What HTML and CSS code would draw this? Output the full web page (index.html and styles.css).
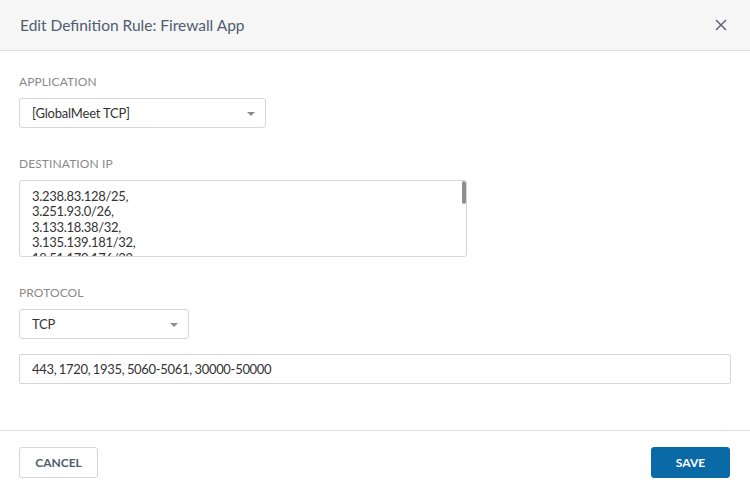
FILE: index.html
```html
<!DOCTYPE html>
<html>
<head>
<meta charset="utf-8">
<link rel="stylesheet" href="styles.css">
</head>
<body>
<div class="dialog">
  <header class="header">
    <h1 class="title">Edit Definition Rule: Firewall App</h1>
    <button class="close" aria-label="Close">
      <svg width="12" height="12" viewBox="0 0 12 12"><path d="M1 1 L11 11 M11 1 L1 11" stroke="#5a6778" stroke-width="1.5" fill="none"/></svg>
    </button>
  </header>
  <main class="body">
    <div class="field">
      <label class="label">Application</label>
      <div class="select select-app"><span class="val">[GlobalMeet TCP]</span><span class="caret"></span></div>
    </div>
    <div class="field">
      <label class="label">Destination IP</label>
      <div class="textarea">
        <div class="lines">3.238.83.128/25,<br>3.251.93.0/26,<br>3.133.18.38/32,<br>3.135.139.181/32,<br>18.51.170.176/32,</div>
        <div class="thumb"></div>
      </div>
    </div>
    <div class="field">
      <label class="label">Protocol</label>
      <div class="select select-proto"><span class="val">TCP</span><span class="caret"></span></div>
      <div class="input">443, 1720, 1935, 5060-5061, 30000-50000</div>
    </div>
  </main>
  <footer class="footer">
    <button class="btn btn-cancel">CANCEL</button>
    <button class="btn btn-save">SAVE</button>
  </footer>
</div>
</body>
</html>
```
FILE: styles.css
```css
* { box-sizing: border-box; }
html, body { margin: 0; padding: 0; background: #fff; }
body { font-family: Lato, "Open Sans", "Liberation Sans", sans-serif; color: #333; width: 750px; height: 490px; overflow: hidden; }
.dialog { display: flex; flex-direction: column; height: 490px; }
.header {
  height: 51px; background: #f6f6f6; border-bottom: 1px solid #dedede;
  display: flex; align-items: center; justify-content: space-between;
  padding: 0 20px 0 20px;
}
.title { margin: 0; font-size: 15.5px; font-weight: 400; color: #4f5d6f; }
.close { background: none; border: 0; padding: 0; width: 12px; height: 12px; display: flex; cursor: pointer; margin-right: 3px; }
.body { padding: 23px 20px 0 19px; flex: 1; }
.field { display: flex; flex-direction: column; margin-bottom: 28px; }
.label { font-size: 12px; line-height: 16px; text-transform: uppercase; color: #8a8a8a; margin-bottom: 8px; letter-spacing: 0.1px; }
.select {
  height: 30px; border: 1px solid #d6d6d6; border-radius: 3px; background: #fff;
  display: flex; align-items: center; justify-content: space-between;
  padding: 0 10px 0 12px; font-size: 13px; color: #333;
}
.val { letter-spacing: -0.2px; }
.select-app { width: 247px; }
.select-proto { width: 170px; }
.caret { width: 0; height: 0; border-left: 4px solid transparent; border-right: 4px solid transparent; border-top: 4px solid #8c8c8c; margin-top: 2px; }
.textarea {
  position: relative; width: 448px; height: 77px; border: 1px solid #d6d6d6; border-radius: 3px;
  overflow: hidden; padding: 7.5px 12px 0 12px;
}
.lines { font-size: 13px; line-height: 15.5px; color: #333; letter-spacing: -0.3px; }
.thumb { position: absolute; right: 0; top: 0; width: 4px; height: 23px; background: #8e8e8e; border-radius: 2px; }
.input {
  margin-top: 15px; width: 712px; height: 30px; border: 1px solid #d6d6d6; border-radius: 2px;
  display: flex; align-items: center; padding: 0 12px; font-size: 13px; color: #333;
  letter-spacing: -0.3px; word-spacing: -0.6px;
}
.footer {
  height: 60px; border-top: 1px solid #dedede; display: flex; justify-content: space-between;
  align-items: flex-start; padding: 16px 20px 0 19px;
}
.btn { height: 31px; width: 79px; border-radius: 3px; font-family: inherit; font-size: 12px; font-weight: 700; cursor: pointer; }
.btn-cancel { background: #fff; border: 1px solid #d6d6d6; color: #4f5d6f; }
.btn-save { background: #0a6aa5; border: 1px solid #0a6aa5; color: #fff; }
```
